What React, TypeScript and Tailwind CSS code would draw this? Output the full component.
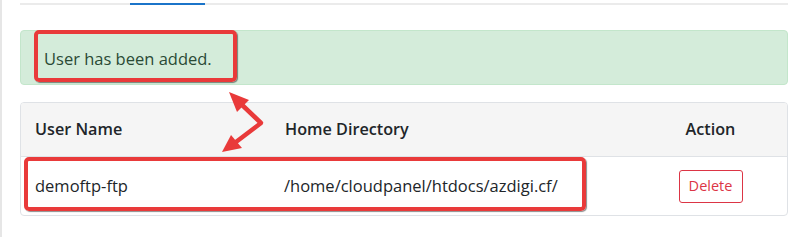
import React from "react";

const font = { fontFamily: '"Open Sans", "Noto Sans", sans-serif' };

const Arrows: React.FC = () => (
  <svg
    className="absolute left-0 top-0 pointer-events-none"
    width="794"
    height="237"
    viewBox="0 0 794 237"
  >
    <g stroke="#e93a3a" strokeWidth="4.5" strokeLinecap="round" strokeLinejoin="round" fill="none">
      <polyline points="237,102 259,123 230,145" />
    </g>
    <g fill="#e93a3a">
      <polygon points="227,92 247,100 235,112" />
      <polygon points="220,152 229,135 240,148" />
    </g>
  </svg>
);

export default function App() {
  return (
    <div
      className="relative w-[794px] h-[237px] bg-white border-l-2 border-[#e6e6e6] overflow-hidden"
      style={font}
    >
      <div className="pl-[18px] pr-[6px] pt-[3px]">
        {/* tabs underline */}
        <div className="flex h-[2px]">
          <div className="w-[110px] bg-[#ebebeb]" />
          <div className="w-[75px] bg-[#1b74c9]" />
          <div className="flex-1 bg-[#ebebeb]" />
        </div>

        {/* alert */}
        <div className="mt-[25px] h-[55px] flex items-center pl-[23px] pt-[3px] rounded-[4px] border border-[#c3e6cb] bg-[#d4ecda] text-[#2a4a35] text-[16.5px]">
          User has been added.
        </div>

        {/* table */}
        <div className="mt-[17px] rounded-[4px] border border-[#dfe2e6] overflow-hidden text-[#212529]">
          <div className="flex h-[54px] items-center bg-[#f5f5f5] border-b border-[#dfe2e6] font-semibold text-[16.2px]">
            <div className="w-[250px] pl-[14px]">User Name</div>
            <div className="flex-1 pl-[14px]">Home Directory</div>
            <div className="w-[153px] text-center">Action</div>
          </div>
          <div className="flex h-[58px] items-center text-[16.5px]">
            <div className="w-[250px] pl-[14px]">demoftp-ftp</div>
            <div className="flex-1 pl-[13px]">/home/cloudpanel/htdocs/azdigi.cf/</div>
            <div className="w-[153px] flex justify-center">
              <button className="h-[33px] w-[64px] rounded-[3px] border border-[#dc3545] text-[#dc3545] text-[14.5px] bg-white">
                Delete
              </button>
            </div>
          </div>
        </div>
      </div>

      {/* annotations */}
      <div className="absolute left-[32px] top-[30px] w-[203px] h-[52px] rounded-[5px] border-[4px] border-[#e93a3a] shadow-[1px_1px_1px_rgba(0,0,0,0.45)]" />
      <div className="absolute left-[22px] top-[157px] w-[562px] h-[54px] rounded-[5px] border-[4px] border-[#e93a3a] shadow-[1px_1px_1px_rgba(0,0,0,0.45)]" />
      <Arrows />
    </div>
  );
}
